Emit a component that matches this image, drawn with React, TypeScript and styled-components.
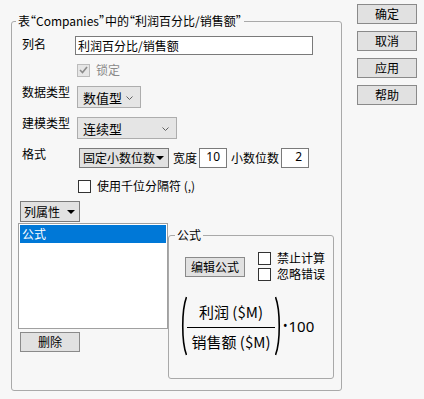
import React from 'react'
import styled, { createGlobalStyle } from 'styled-components'

const GlobalStyle = createGlobalStyle`
	html, body, #root {
		margin: 0;
		padding: 0;
		height: 100%;
	}
	body {
		background: #f7f7f7;
		color: #000;
		font-family: 'Noto Sans CJK SC', 'Noto Sans', sans-serif;
		font-size: 12px;
		line-height: 16px;
	}
`

const Check = ({ muted }: { muted?: boolean }) => (
	<svg width="9" height="8" viewBox="0 0 9 8">
		<polyline points="1,4 3.5,6.5 8,1" fill="none" stroke={muted ? '#8a8a8a' : '#000'} strokeWidth="1.6" />
	</svg>
)

const Chevron = () => (
	<svg width="7" height="4" viewBox="0 0 7 4">
		<polyline points="0.5,0.5 3.5,3.5 6.5,0.5" fill="none" stroke="#606060" strokeWidth="1" />
	</svg>
)

const Caret = () => (
	<svg width="8" height="4" viewBox="0 0 8 4">
		<polygon points="0,0 8,0 4,4" fill="#000" />
	</svg>
)

const Paren = ({ flip }: { flip?: boolean }) => (
	<svg width="6" height="60" viewBox="0 0 6 60" style={flip ? { transform: 'scaleX(-1)' } : undefined}>
		<path d="M5.5 1 C0.5 14 0.5 46 5.5 59" fill="none" stroke="#000" strokeWidth="1.6" />
	</svg>
)

export default function App(): JSX.Element {
	return (
		<Page>
			<GlobalStyle />
			<GroupBox>
				<GroupTitle>表“Companies”中的“利润百分比/销售额”</GroupTitle>
				<Form>
					<FieldRow>
						<FieldLabel>列名</FieldLabel>
						<TextField defaultValue="利润百分比/销售额" />
					</FieldRow>
					<FieldRow $gap={7}>
						<span />
						<CheckRow $indent={2} $muted>
							<CheckBox $disabled>
								<Check muted />
							</CheckBox>
							锁定
						</CheckRow>
					</FieldRow>
					<FieldRow $gap={8}>
						<FieldLabel $lift={2}>数据类型</FieldLabel>
						<Combo $width={64}>
							数值型
							<Chevron />
						</Combo>
					</FieldRow>
					<FieldRow $gap={9}>
						<FieldLabel $lift={2}>建模类型</FieldLabel>
						<Combo $width={100}>
							连续型
							<Chevron />
						</Combo>
					</FieldRow>
					<FieldRow $gap={9}>
						<FieldLabel $lift={2}>格式</FieldLabel>
						<FormatLine>
							<DropButton $width={90}>
								固定小数位数
								<Caret />
							</DropButton>
							<InlineLabel>宽度</InlineLabel>
							<NumberField>10</NumberField>
							<InlineLabel>小数位数</InlineLabel>
							<NumberField>2</NumberField>
						</FormatLine>
					</FieldRow>
					<FieldRow $gap={10}>
						<span />
						<CheckRow $indent={3}>
							<CheckBox />
							使用千位分隔符 (,)
						</CheckRow>
					</FieldRow>
					<DropButton $width={60} $height={21} $indent={2} $gap={7}>
						列属性
						<Caret />
					</DropButton>
					<BottomSection>
						<ListColumn>
							<ListBox>
								<ListItem $selected>公式</ListItem>
							</ListBox>
							<PushButton $indent={2}>删除</PushButton>
						</ListColumn>
						<FormulaBox>
							<FormulaTitle>公式</FormulaTitle>
							<FormulaBody>
								<FormulaTools>
									<EditButton>编辑公式</EditButton>
									<CheckColumn>
										<CheckRow>
											<CheckBox />
											禁止计算
										</CheckRow>
										<CheckRow>
											<CheckBox />
											忽略错误
										</CheckRow>
									</CheckColumn>
								</FormulaTools>
								<Formula>
									<Paren />
									<Fraction>
										<Numerator>利润 ($M)</Numerator>
										<Denominator>销售额 ($M)</Denominator>
									</Fraction>
									<Paren flip />
									<Dot>•</Dot>
									<Factor>100</Factor>
								</Formula>
							</FormulaBody>
						</FormulaBox>
					</BottomSection>
				</Form>
			</GroupBox>
			<ButtonColumn>
				<PushButton>确定</PushButton>
				<PushButton>取消</PushButton>
				<PushButton>应用</PushButton>
				<PushButton>帮助</PushButton>
			</ButtonColumn>
		</Page>
	)
}

const Page = styled.div`
	display: flex;
	align-items: flex-start;
	padding: 4px 0 0 11px;
	box-sizing: border-box;
	height: 399px;
	width: 424px;
`

const GroupBox = styled.fieldset`
	margin: 9px 0 0;
	padding: 7px 0 11px;
	width: 331px;
	box-sizing: border-box;
	min-width: 0;
	border: 1px solid #a9a9a9;
	border-radius: 3px;
`

const GroupTitle = styled.legend`
	margin-left: 4px;
	padding: 0 2px;
	line-height: 16px;
	font-feature-settings: 'halt';
`

const Form = styled.div`
	display: flex;
	flex-direction: column;
	padding-left: 6px;
`

const FieldRow = styled.div<{ $gap?: number }>`
	display: grid;
	grid-template-columns: 57px auto;
	align-items: start;
	margin-top: ${({ $gap }) => $gap ?? 0}px;
`

const FieldLabel = styled.span<{ $lift?: number }>`
	padding-left: 4px;
	margin-top: ${({ $lift }) => -($lift ?? 0)}px;
	white-space: nowrap;
`

const TextField = styled.input`
	width: 238px;
	height: 19px;
	box-sizing: border-box;
	margin: 0;
	padding: 0 2px;
	border: 1px solid #7a7a7a;
	background: #fff;
	font: inherit;
	color: #000;
	outline: none;
`

const CheckRow = styled.label<{ $indent?: number; $muted?: boolean }>`
	display: flex;
	align-items: center;
	gap: 6px;
	height: 16px;
	margin-left: ${({ $indent }) => $indent ?? 0}px;
	color: ${({ $muted }) => ($muted ? '#8a8a8a' : '#000')};
	white-space: nowrap;
`

const CheckBox = styled.span<{ $disabled?: boolean }>`
	display: inline-flex;
	align-items: center;
	justify-content: center;
	width: 13px;
	height: 13px;
	box-sizing: border-box;
	border: 1px solid ${({ $disabled }) => ($disabled ? '#bcbcbc' : '#333')};
	background: ${({ $disabled }) => ($disabled ? '#e6e6e6' : '#fff')};
`

const Combo = styled.div<{ $width: number }>`
	display: flex;
	align-items: center;
	justify-content: space-between;
	width: ${({ $width }) => $width}px;
	height: 22px;
	box-sizing: border-box;
	margin-left: 2px;
	padding: 1px 7px 0 5px;
	border: 1px solid #adadad;
	background: #e5e5e5;
	font-size: 13px;
	white-space: nowrap;
`

const FormatLine = styled.div`
	display: flex;
	align-items: center;
	margin-left: 4px;
`

const DropButton = styled.div<{ $width: number; $height?: number; $indent?: number; $gap?: number }>`
	display: flex;
	align-items: center;
	justify-content: space-between;
	width: ${({ $width }) => $width}px;
	height: ${({ $height }) => $height ?? 20}px;
	box-sizing: border-box;
	margin-left: ${({ $indent }) => $indent ?? 0}px;
	margin-top: ${({ $gap }) => $gap ?? 0}px;
	padding: 0 4px 0 3px;
	border: 1px solid #7a7a7a;
	background: #e1e1e1;
	white-space: nowrap;
`

const InlineLabel = styled.span`
	margin: 0 2px 0 4px;
	white-space: nowrap;
`

const NumberField = styled.div`
	width: 28px;
	height: 20px;
	box-sizing: border-box;
	padding: 0 6px 0 0;
	border: 1px solid #7a7a7a;
	background: #fff;
	text-align: right;
	line-height: 16px;
	font-family: 'Noto Sans', sans-serif;
`

const BottomSection = styled.div`
	display: flex;
	align-items: flex-start;
	margin-top: 1px;
`

const ListColumn = styled.div`
	display: flex;
	flex-direction: column;
	gap: 3px;
`

const ListBox = styled.div`
	width: 150px;
	height: 106px;
	box-sizing: border-box;
	padding: 1px;
	border: 1px solid #a0a0a0;
	background: #fff;
`

const ListItem = styled.div<{ $selected?: boolean }>`
	height: 18px;
	padding-left: 2px;
	line-height: 18px;
	background: ${({ $selected }) => ($selected ? '#0078d7' : 'transparent')};
	color: ${({ $selected }) => ($selected ? '#fff' : '#000')};
`

const PushButton = styled.div<{ $indent?: number }>`
	display: flex;
	align-items: center;
	justify-content: center;
	width: 60px;
	height: 20px;
	box-sizing: border-box;
	margin-left: ${({ $indent }) => $indent ?? 0}px;
	border: 1px solid #8a8a8a;
	background: #e1e1e1;
`

const FormulaBox = styled.fieldset`
	margin: 4px 0 0;
	padding: 7px 0 22px;
	width: 166px;
	box-sizing: border-box;
	min-width: 0;
	border: 1px solid #a9a9a9;
	border-radius: 3px;
`

const FormulaTitle = styled.legend`
	margin-left: 6px;
	padding: 0 2px;
	line-height: 16px;
`

const FormulaBody = styled.div`
	display: flex;
	flex-direction: column;
	padding-left: 12px;
`

const FormulaTools = styled.div`
	display: flex;
	align-items: flex-start;
`

const EditButton = styled(PushButton)`
	margin: 7px 0 0 4px;
`

const CheckColumn = styled.div`
	display: flex;
	flex-direction: column;
	margin-left: 13px;
`

const Formula = styled.div`
	display: flex;
	align-items: center;
	margin-top: 14px;
	font-size: 15px;
`

const Fraction = styled.div`
	display: flex;
	flex-direction: column;
	width: 88px;
	height: 60px;
`

const Numerator = styled.div`
	display: flex;
	align-items: center;
	justify-content: center;
	height: 32px;
	border-bottom: 1px solid #000;
	box-sizing: border-box;
`

const Denominator = styled.div`
	display: flex;
	align-items: center;
	justify-content: center;
	height: 28px;
`

const Dot = styled.span`
	margin: 0 1px 0 2px;
	font-family: 'Noto Sans', sans-serif;
	font-size: 12px;
`

const Factor = styled.span`
	font-family: 'Noto Sans', sans-serif;
`

const ButtonColumn = styled.div`
	display: flex;
	flex-direction: column;
	gap: 7px;
	margin-left: 15px;
`
